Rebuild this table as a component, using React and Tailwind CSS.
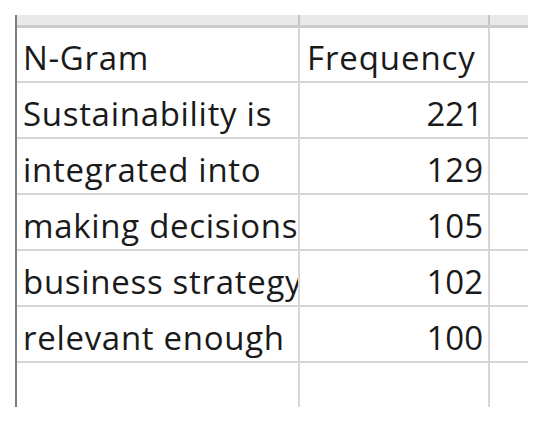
import React from "react";

const rows = [
  ["Sustainability is", "221"],
  ["integrated into", "129"],
  ["making decisions", "105"],
  ["business strategy", "102"],
  ["relevant enough", "100"],
];

function Row({ a, b, header, h }) {
  return (
    <div className={`grid grid-cols-[283px_190px_38px] border-b-2 border-[#d6d6d6] ${h}`}>
      <div className="border-r-2 border-[#d6d6d6] overflow-hidden whitespace-nowrap flex items-end pl-[6px] pb-[7px]">
        <span className="leading-none tracking-[0.7px]">{a}</span>
      </div>
      <div
        className={`border-r-2 border-[#d6d6d6] overflow-hidden whitespace-nowrap flex items-end pb-[7px] ${
          header ? "justify-start pl-[7px] tracking-[0.9px]" : "justify-end pr-[5px]"
        }`}
      >
        <span className="leading-none">{b}</span>
      </div>
      <div />
    </div>
  );
}

export default function App() {
  return (
    <div
      className="w-[550px] h-[429px] bg-white pt-[15px] pl-[15px] text-[33px] font-medium text-[#1a1a1a]"
      style={{ fontFamily: "'Open Sans', 'Noto Sans', sans-serif" }}
    >
      <div className="w-[513px] h-[392px] border-l-2 border-[#7d7d7d] flex flex-col">
        <div className="grid grid-cols-[283px_190px_38px] h-[13px] bg-[#e9e9e9] border-b-[3px] border-[#cbcbcb]">
          <div className="border-r-2 border-[#c4c4c4]" />
          <div className="border-r-2 border-[#c4c4c4]" />
          <div />
        </div>
        <Row a="N-Gram" b="Frequency" header h="h-[55px]" />
        {rows.map(([a, b]) => (
          <Row key={a} a={a} b={b} h="h-[56px]" />
        ))}
        <div className="grid grid-cols-[283px_190px_38px] flex-1">
          <div className="border-r-2 border-[#d6d6d6]" />
          <div className="border-r-2 border-[#d6d6d6]" />
          <div />
        </div>
      </div>
    </div>
  );
}
